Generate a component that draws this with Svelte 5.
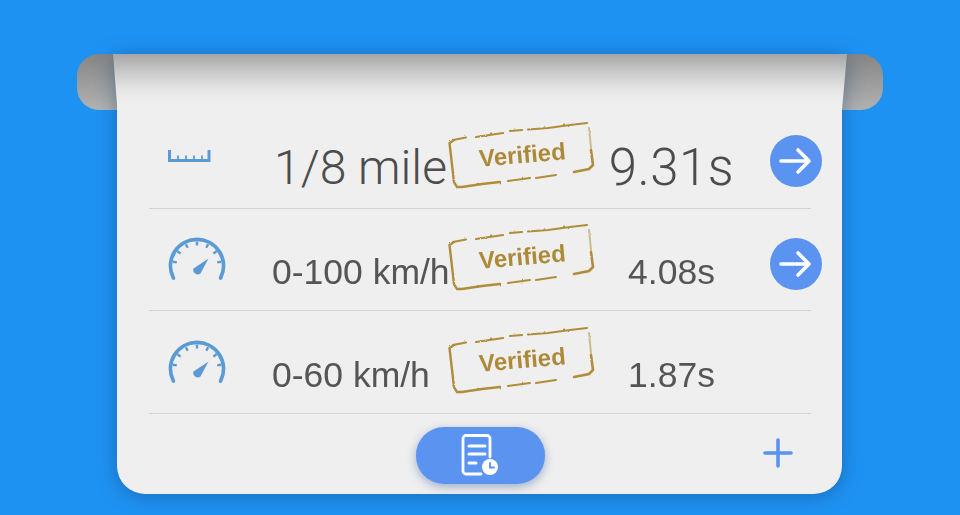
<script>
  const rows = [
    { icon: 'ruler', label: '1/8 mile', value: '9.31s', big: true, arrow: true },
    { icon: 'gauge', label: '0-100 km/h', value: '4.08s', big: false, arrow: true },
    { icon: 'gauge', label: '0-60 km/h', value: '1.87s', big: false, arrow: false }
  ];
  const ticks = [-80, -53, -27, 0, 27, 53, 80];
</script>

<main class="scene">
  <svg class="defs" width="0" height="0" aria-hidden="true">
    <filter id="rough" x="-5%" y="-10%" width="110%" height="120%">
      <feTurbulence type="fractalNoise" baseFrequency="0.22" numOctaves="2" seed="4" />
      <feDisplacementMap in="SourceGraphic" scale="2" />
      <feGaussianBlur stdDeviation="0.4" />
    </filter>
  </svg>
  <div class="scroll">
    <span class="flap left"></span>
    <span class="flap right"></span>
    <div class="shadow">
      <section class="sheet">
        {#each rows as r}
          <div class="row" class:big={r.big}>
            <div class="icon">
              {#if r.icon === 'ruler'}
                <svg width="43" height="14" viewBox="0 0 43 14" fill="none" stroke="#5b9bd5">
                  <path d="M1.500 1v10.500h39.500V1" stroke-width="3" />
                  <path d="M10 6.500v5M18 6.500v5M26 6.500v5M34 6.500v5" stroke-width="1.800" />
                </svg>
              {:else}
                <svg width="60" height="44" viewBox="0 0 60 44" fill="none" stroke="#5b9bd5">
                  <path d="M6.400 41A26.500 26.500 0 1 1 53.600 41" stroke-width="3.800" stroke-linecap="round" />
                  {#each ticks as t}
                    <line x1="30" y1="4.500" x2="30" y2="8.500" stroke-width="2.400" transform="rotate({t} 30 29)" />
                  {/each}
                  <path d="M26.500 31.500L41.500 21.500L33.500 36.500A4.500 4.500 0 0 1 26.500 31.500Z" fill="#5b9bd5" stroke="none" />
                </svg>
              {/if}
            </div>
            <div class="label">{r.label}</div>
            <div class="stamp">
              <svg class="frame" width="146" height="66" viewBox="0 0 146 66" fill="none" stroke="#b08d3a" stroke-linecap="round">
                <g filter="url(#rough)">
                  <path d="M6 18L1.500 21L6 60L9 65L14 65L34 62L52 60" stroke-width="2.400" />
                  <path d="M60 59L82 56M88 56L108 53" stroke-width="2" />
                  <path d="M5 18L18 15.500M28 15L55 11M62 9L74 8M80 7.500L100 6L122 3L139 1" stroke-width="2.200" />
                  <path d="M141 6L143 26" stroke="#c9bb90" stroke-width="2" />
                  <path d="M143 28L145 43L141 47L126 50" stroke-width="2.600" />
                </g>
              </svg>
              <span>Verified</span>
            </div>
            <div class="value">{r.value}</div>
            <div class="go">
              {#if r.arrow}
                <span class="arrow">
                  <svg width="34" height="30" viewBox="0 0 34 30" fill="none" stroke="#fff" stroke-width="3.600" stroke-linecap="round" stroke-linejoin="round">
                    <path d="M2 15H30M19 4L30 15L19 26" />
                  </svg>
                </span>
              {/if}
            </div>
          </div>
        {/each}
        <footer class="foot">
          <span></span>
          <button class="report" aria-label="Report">
            <svg width="40" height="44" viewBox="0 0 40 44" fill="none" stroke="#fff" stroke-linecap="round">
              <path d="M30 24V5.500A3 3 0 0 0 27 2.500H6A3 3 0 0 0 3 5.500V38A3 3 0 0 0 6 41H21" stroke-width="2.800" />
              <path d="M9 13H25M9 21H25M9 30H16" stroke-width="3" />
              <circle cx="30" cy="34" r="8" fill="#fff" stroke="none" />
              <path d="M30 30V34.500H34" stroke="#5b93f0" stroke-width="1.800" />
            </svg>
          </button>
          <span class="plus">
            <svg width="30" height="30" viewBox="0 0 30 30" stroke="#5b93f0" stroke-width="3.600" stroke-linecap="round">
              <path d="M15 2V28M2 15H28" />
            </svg>
          </span>
        </footer>
      </section>
    </div>
  </div>
</main>

<style>
  :global(body) {
    margin: 0;
    background: #1e92f3;
    overflow: hidden;
  }
  .defs {
    position: absolute;
  }
  .scene {
    width: 960px;
    height: 515px;
    padding-top: 54px;
    box-sizing: border-box;
    display: flex;
    justify-content: center;
    font-family: "Liberation Sans", Arial, sans-serif;
  }
  .scroll {
    position: relative;
    width: 734px;
    height: 440px;
  }
  .flap {
    position: absolute;
    top: 0;
    width: 46px;
    height: 56px;
    background: linear-gradient(#858585, #b2b2b2);
  }
  .flap.left {
    left: -36px;
    border-radius: 22px 0 0 22px;
  }
  .flap.right {
    right: -36px;
    border-radius: 0 22px 22px 0;
  }
  .shadow {
    position: relative;
    height: 100%;
    filter: drop-shadow(0 2px 10px rgba(20, 60, 110, 0.45));
  }
  .sheet {
    height: 100%;
    box-sizing: border-box;
    padding: 52px 36px 0;
    background: linear-gradient(#a6a6a6 0, #c9c9c9 18px, #e6e6e6 36px, #efefef 50px);
    clip-path: path("M0 0H734L729 56V412A28 28 0 0 1 701 440H32A28 28 0 0 1 4 412V50Z");
  }
  .row {
    height: 102.500px;
    box-sizing: border-box;
    border-bottom: 1.500px solid #d4d4d4;
    display: grid;
    grid-template-columns: 123px 176px 146px 155px 62px;
    align-items: center;
    color: #555;
  }
  .icon {
    padding-left: 18px;
    display: flex;
  }
  .row.big .icon {
    padding-left: 19px;
    transform: translateY(-1px);
  }
  .label,
  .value {
    font-size: 35.500px;
    padding-top: 27px;
    white-space: nowrap;
  }
  .value {
    text-align: center;
  }
  .row.big .label,
  .row.big .value {
    font-family: Roboto, "Liberation Sans", sans-serif;
    font-weight: 300;
    color: #4c4c4c;
  }
  .row.big .label {
    font-size: 48px;
    padding: 22px 0 0 2px;
  }
  .row.big .value {
    font-size: 51px;
    padding: 21px 0 0 0;
    letter-spacing: 0.5px;
  }
  .stamp {
    position: relative;
    height: 66px;
    display: flex;
    align-items: center;
    justify-content: center;
    transform: translateY(-2px);
  }
  .frame {
    position: absolute;
    inset: 0;
    overflow: visible;
  }
  .stamp span {
    font-size: 24px;
    font-weight: 700;
    color: #ac8a38;
    transform: translate(1px, 0) rotate(-5deg);
  }
  .go {
    display: flex;
    justify-content: flex-end;
    margin-right: -11px;
    transform: translateY(5px);
  }
  .row.big .go {
    transform: translateY(4px);
  }
  .arrow {
    width: 52px;
    height: 52px;
    border-radius: 50%;
    background: #5b93f0;
    display: flex;
    align-items: center;
    justify-content: center;
  }
  .foot {
    display: grid;
    grid-template-columns: 1fr 129px 1fr;
    align-items: start;
    padding-top: 13px;
  }
  .report {
    width: 129px;
    height: 57px;
    border: 0;
    padding: 0;
    border-radius: 28px;
    background: #5b93f0;
    box-shadow: 0 3px 10px rgba(60, 90, 160, 0.45);
    display: flex;
    align-items: center;
    justify-content: center;
  }
  .plus {
    justify-self: end;
    display: flex;
    margin: 11px 18px 0 0;
  }
</style>
